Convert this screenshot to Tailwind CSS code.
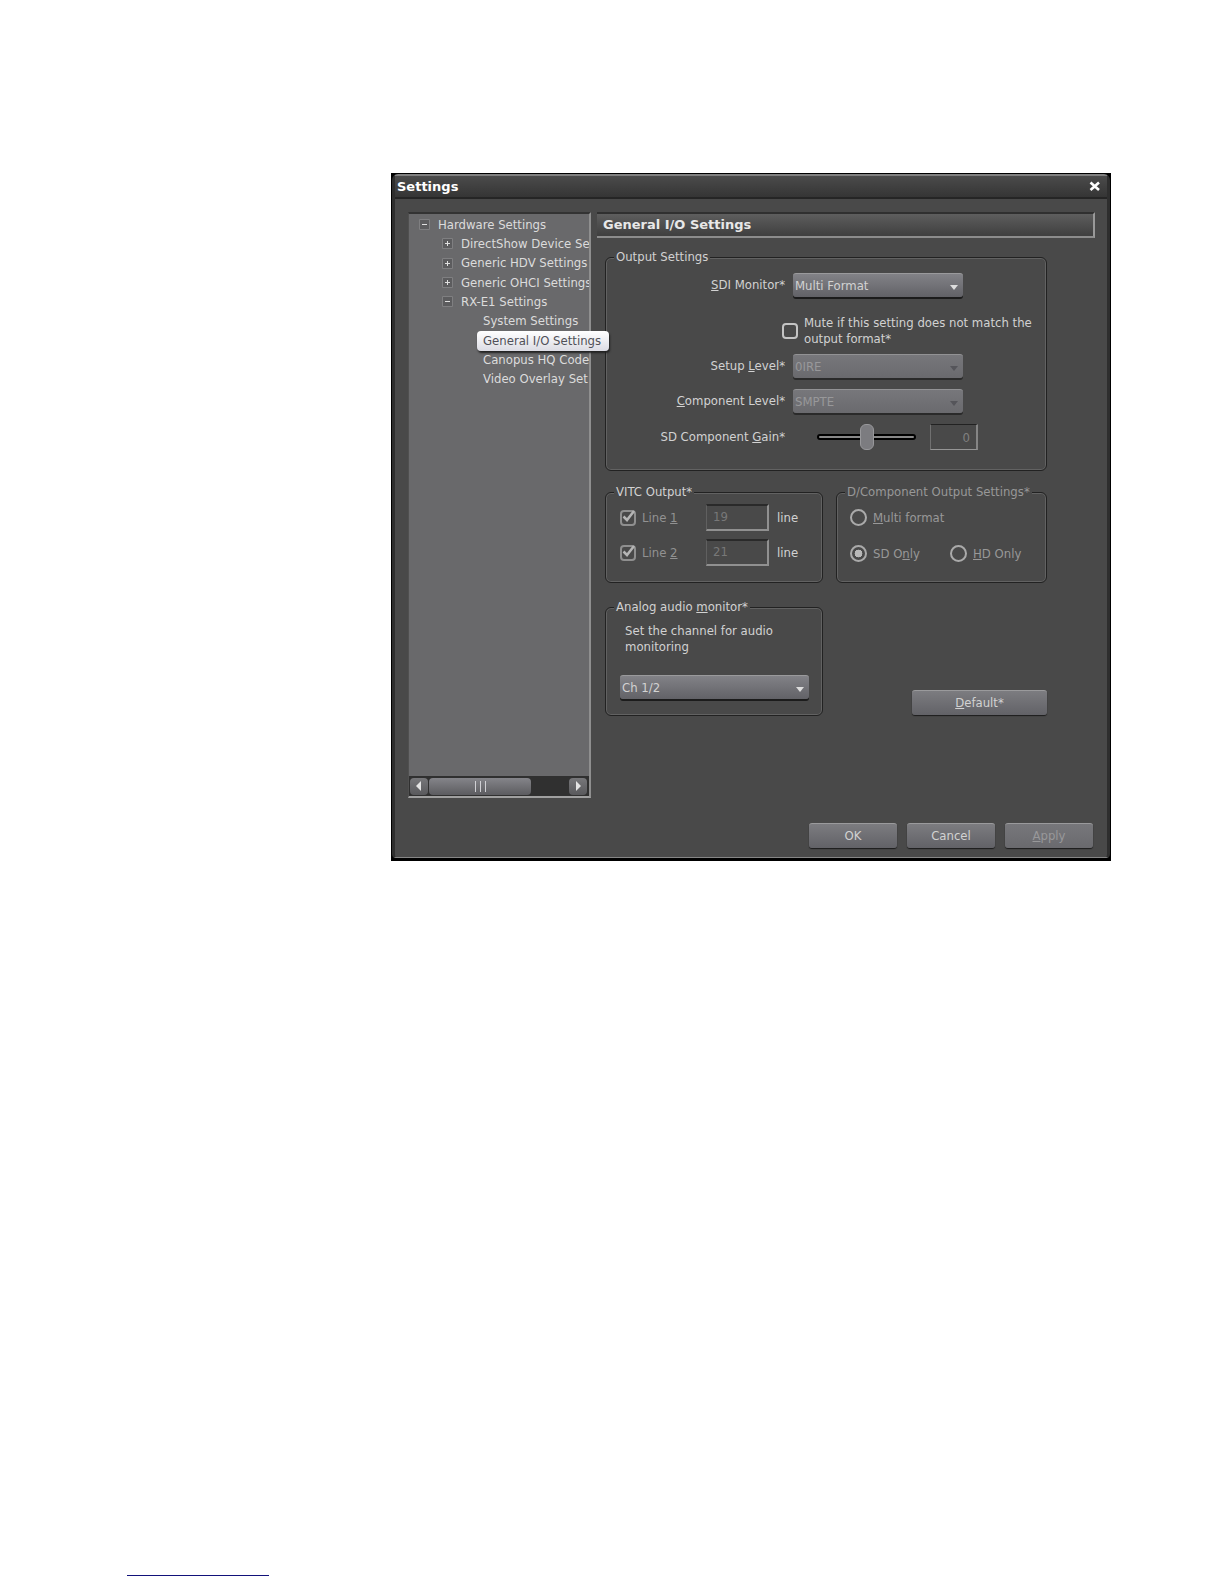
<!DOCTYPE html>
<html lang="en">
  <head>
    <meta charset="UTF-8" />
    <meta name="viewport" content="width=device-width, initial-scale=1.0" />
    <title>Settings</title>
    <script src="https://cdn.jsdelivr.net/npm/@tailwindcss/browser@4"></script>
  </head>
  <body class="min-h-screen flex flex-col justify-between bg-white font-['DejaVu_Sans_Condensed','DejaVu_Sans',sans-serif] text-[13px] leading-4 text-[#d2d2d2]">
    <main class="pt-[173px] pl-[391px] pr-[113px]">
      <!-- window frame -->
      <div class="bg-black pt-px pb-[3px] px-px">
        <div class="rounded-t-md rounded-b border-t-2 border-b border-t-[#808080] border-b-[#858585] border-x-3 border-x-[#2e2e2e] bg-[#494949]">
          <header class="h-[23px] flex items-center justify-between pl-0.5 pr-1.5 bg-linear-to-b from-[#4b4b4b] to-[#353535] border-b-2 border-[#252525] text-white">
            <h1 class="font-['DejaVu_Sans',sans-serif] text-[13px] font-bold">Settings</h1>
            <button type="button" aria-label="Close" class="p-0">
              <svg class="w-3 h-3" viewBox="0 0 12 12" stroke="#fff" stroke-width="2.6" fill="none"><path d="M1.500 1.500 10 9M10 1.500 1.500 9" /></svg>
            </button>
          </header>

          <div class="pt-[13px] pl-[13px] pr-3 flex gap-1.5">
            <!-- tree -->
            <nav class="w-[183px] shrink-0 h-[586px] flex flex-col justify-between bg-[#69696b] border-t-2 border-t-[#333] border-r-2 border-r-[#8f8f8f] border-b-2 border-b-[#a0a0a0] border-l border-l-[#505050]">
              <ul class="h-[174px] mt-px grid grid-cols-1 grid-rows-9 items-center whitespace-nowrap text-[#dcdcdc]">
                <li class="pl-2.5 flex items-center gap-2 overflow-hidden">
                  <svg class="w-[11px] h-[11px] shrink-0" viewBox="0 0 11 11" fill="none"><path d="M.5.500h10v10h-10z" fill="#5c5c5e" stroke="#7f7f81" /><path d="M3 5.500h5" stroke="#e0e0e0" /></svg>Hardware Settings</li>
                <li class="pl-[33px] flex items-center gap-2 overflow-hidden">
                  <svg class="w-[11px] h-[11px] shrink-0" viewBox="0 0 11 11" fill="none"><path d="M.5.500h10v10h-10z" fill="#5c5c5e" stroke="#7f7f81" /><path d="M3 5.500h5M5.500 3v5" stroke="#e0e0e0" /></svg>DirectShow Device Set</li>
                <li class="pl-[33px] flex items-center gap-2 overflow-hidden">
                  <svg class="w-[11px] h-[11px] shrink-0" viewBox="0 0 11 11" fill="none"><path d="M.5.500h10v10h-10z" fill="#5c5c5e" stroke="#7f7f81" /><path d="M3 5.500h5M5.500 3v5" stroke="#e0e0e0" /></svg>Generic HDV Settings</li>
                <li class="pl-[33px] flex items-center gap-2 overflow-hidden">
                  <svg class="w-[11px] h-[11px] shrink-0" viewBox="0 0 11 11" fill="none"><path d="M.5.500h10v10h-10z" fill="#5c5c5e" stroke="#7f7f81" /><path d="M3 5.500h5M5.500 3v5" stroke="#e0e0e0" /></svg>Generic OHCI Settings</li>
                <li class="pl-[33px] flex items-center gap-2 overflow-hidden">
                  <svg class="w-[11px] h-[11px] shrink-0" viewBox="0 0 11 11" fill="none"><path d="M.5.500h10v10h-10z" fill="#5c5c5e" stroke="#7f7f81" /><path d="M3 5.500h5" stroke="#e0e0e0" /></svg>RX-E1 Settings</li>
                <li class="pl-[74px] overflow-hidden">System Settings</li>
                <li class="pl-[68px] flex">
                  <span class="relative z-10 shrink-0 rounded-sm pl-1.5 pr-2 py-0.5 bg-linear-to-b from-white to-[#dcdce4] text-[#505058] shadow-[1px_2px_2px_#222]">General I/O Settings</span></li>
                <li class="pl-[74px] overflow-hidden">Canopus HQ Code</li>
                <li class="pl-[74px] overflow-hidden">Video Overlay Set</li>
              </ul>
              <div class="h-5 flex items-center justify-between bg-[#303030] pl-px pr-0.5">
                <button type="button" aria-label="Scroll left" class="w-[18px] h-[17px] flex items-center justify-center rounded-sm bg-linear-to-b from-[#77777a] to-[#59595c]">
                  <svg class="w-2.5 h-2.5" viewBox="0 0 10 10" fill="#e4e4e4"><path d="M7 0v10L2 5z" /></svg></button>
                <div class="w-[102px] h-[17px] mr-auto ml-px flex items-center justify-center gap-1 rounded-sm bg-linear-to-b from-[#85858a] to-[#5c5c60]">
                  <i class="w-px h-[11px] bg-[#d0d0d4]"></i><i class="w-px h-[11px] bg-[#d0d0d4]"></i><i class="w-px h-[11px] bg-[#d0d0d4]"></i>
                </div>
                <button type="button" aria-label="Scroll right" class="w-[18px] h-[17px] flex items-center justify-center rounded-sm bg-linear-to-b from-[#77777a] to-[#59595c]">
                  <svg class="w-2.5 h-2.5" viewBox="0 0 10 10" fill="#e4e4e4"><path d="M3 0v10l5-5z" /></svg></button>
              </div>
            </nav>

            <!-- settings panel -->
            <form class="grow" id="settings">
              <h2 class="h-[26px] flex items-center pl-1.5 border-t-2 border-t-[#303030] border-r-2 border-r-[#999] border-b-2 border-b-[#8c8c8c] bg-linear-to-b from-[#5e5e5e] to-[#3f3f3f] font-['DejaVu_Sans',sans-serif] text-[13px] font-bold text-[#e8e8e8]">General I/O Settings</h2>

              <div class="mt-2.5 ml-2 mr-12">
                <fieldset class="h-[223px] rounded-md border border-[#222] shadow-[inset_0_0_0_1px_#626262] px-2">
                  <legend class="leading-[18px] px-0.5 bg-[#494949]">Output Settings</legend>
                  <div class="pt-[7px] grid grid-cols-[171px_1fr] gap-x-2 items-center">
                    <label for="sdi" class="text-right"><u>S</u>DI Monitor*</label>
                    <div class="relative w-[170px]">
                      <select id="sdi" class="appearance-none w-full h-[24px] pl-0.5 rounded-[3px] border-t border-[#9a9a9c] bg-linear-to-b from-[#828287] to-[#626267] shadow-[0_2px_0_#1c1c1c]"><option>Multi Format</option></select>
                      <svg class="absolute right-1 top-2.5 w-2.5 h-2 pointer-events-none" viewBox="0 0 10 8" fill="#ddd"><path d="M1 2h8L5 7z" /></svg>
                    </div>
                  </div>
                  <label class="mt-[18px] ml-[168px] flex items-center gap-1.5">
                    <input type="checkbox" class="appearance-none shrink-0 w-4 h-4 rounded border-2 border-[#c4c4c4]" />
                    <span class="whitespace-nowrap">Mute if this setting does not match the<br />output format*</span>
                  </label>
                  <div class="mt-[7px] grid grid-cols-[171px_1fr] gap-x-2 gap-y-[11px] items-center">
                    <label for="setup" class="text-right">Setup <u>L</u>evel*</label>
                    <div class="relative w-[170px]">
                      <select id="setup" disabled class="appearance-none disabled:opacity-100 w-full h-[24px] pl-0.5 rounded-[3px] border-t border-[#929294] bg-linear-to-b from-[#77777b] to-[#6a6a6e] text-[#98989a] shadow-[0_2px_0_#2a2a2a]"><option>0IRE</option></select>
                      <svg class="absolute right-1 top-2.5 w-2.5 h-2 pointer-events-none" viewBox="0 0 10 8" fill="#55555a"><path d="M1 2h8L5 7z" /></svg>
                    </div>
                    <label for="component" class="text-right"><u>C</u>omponent Level*</label>
                    <div class="relative w-[170px]">
                      <select id="component" disabled class="appearance-none disabled:opacity-100 w-full h-[24px] pl-0.5 rounded-[3px] border-t border-[#929294] bg-linear-to-b from-[#77777b] to-[#6a6a6e] text-[#98989a] shadow-[0_2px_0_#2a2a2a]"><option>SMPTE</option></select>
                      <svg class="absolute right-1 top-2.5 w-2.5 h-2 pointer-events-none" viewBox="0 0 10 8" fill="#55555a"><path d="M1 2h8L5 7z" /></svg>
                    </div>
                    <label for="gain" class="text-right">SD Component <u>G</u>ain*</label>
                    <div class="pl-6 flex items-center gap-3.5">
                      <input id="gain" type="range" min="-50" max="50" value="0" class="appearance-none w-[99px] h-[26px] bg-transparent [&::-webkit-slider-runnable-track]:h-[6px] [&::-webkit-slider-runnable-track]:rounded-full [&::-webkit-slider-runnable-track]:border-2 [&::-webkit-slider-runnable-track]:border-black [&::-webkit-slider-runnable-track]:bg-[#888] [&::-webkit-slider-thumb]:appearance-none [&::-webkit-slider-thumb]:w-3.5 [&::-webkit-slider-thumb]:h-[26px] [&::-webkit-slider-thumb]:-mt-3 [&::-webkit-slider-thumb]:rounded-md [&::-webkit-slider-thumb]:border [&::-webkit-slider-thumb]:border-[#98989b] [&::-webkit-slider-thumb]:bg-[#7c7c80]" />
                      <input type="text" aria-label="SD Component Gain value" value="0" disabled class="w-12 h-[26px] pr-1.5 text-right text-[#808080] border-t border-t-[#222] border-l border-l-[#707070] border-r-2 border-r-[#858585] border-b border-b-[#959595]" />
                    </div>
                  </div>
                </fieldset>

                <div class="mt-3 flex justify-between">
                  <fieldset class="w-[218px] h-[100px] rounded-md border border-[#222] shadow-[inset_0_0_0_1px_#626262] px-2">
                    <legend class="leading-[18px] px-0.5 bg-[#494949]">VITC Output*</legend>
                    <div class="pt-[3px] pl-1.5 grid grid-cols-[86px_63px_1fr] gap-y-2 items-center">
                      <label class="flex items-center gap-1.5 text-[#929292]">
                        <span class="relative w-4 h-4"><input type="checkbox" checked disabled class="appearance-none block w-4 h-4 rounded border-2 border-[#8f8f8f]" />
                        <svg class="absolute -top-px left-0 w-4 h-4" viewBox="0 0 16 16" fill="none" stroke="#b5b5b5" stroke-width="2.500"><path d="M3.500 7.500 7 11l7-9" /></svg></span>
                        <span>Line <u>1</u></span>
                      </label>
                      <input id="line1" type="text" value="19" disabled class="w-full h-[27px] pl-1.5 pb-0.5 text-[#787878] border-t-2 border-t-[#2a2a2a] border-l border-l-[#606060] border-r-2 border-r-[#909090] border-b-2 border-b-[#909090]" />
                      <label for="line1" class="pl-2">line</label>
                      <label class="flex items-center gap-1.5 text-[#929292]">
                        <span class="relative w-4 h-4"><input type="checkbox" checked disabled class="appearance-none block w-4 h-4 rounded border-2 border-[#8f8f8f]" />
                        <svg class="absolute -top-px left-0 w-4 h-4" viewBox="0 0 16 16" fill="none" stroke="#b5b5b5" stroke-width="2.500"><path d="M3.500 7.500 7 11l7-9" /></svg></span>
                        <span>Line <u>2</u></span>
                      </label>
                      <input id="line2" type="text" value="21" disabled class="w-full h-[27px] pl-1.5 pb-0.5 text-[#787878] border-t-2 border-t-[#2a2a2a] border-l border-l-[#606060] border-r-2 border-r-[#909090] border-b-2 border-b-[#909090]" />
                      <label for="line2" class="pl-2">line</label>
                    </div>
                  </fieldset>
                  <fieldset class="w-[211px] h-[100px] rounded-md border border-[#222] shadow-[inset_0_0_0_1px_#626262] px-2 text-[#989898]">
                    <legend class="leading-[18px] px-0.5 bg-[#494949] whitespace-nowrap">D/Component Output Settings*</legend>
                    <div class="pt-2 pl-[5px] grid grid-cols-[100px_1fr] gap-y-[19px]">
                      <label class="col-span-2 flex items-center gap-1.5"><input type="radio" name="dcomp" disabled class="appearance-none w-[17px] h-[17px] rounded-full border-2 border-[#aaa]" /><span><u>M</u>ulti format</span></label>
                      <label class="flex items-center gap-1.5"><input type="radio" name="dcomp" checked disabled class="appearance-none w-[17px] h-[17px] rounded-full border-2 border-[#aaa] bg-radial from-[#b8b8b8] from-40% to-transparent to-45%" /><span>SD O<u>n</u>ly</span></label>
                      <label class="flex items-center gap-1.5"><input type="radio" name="dcomp" disabled class="appearance-none w-[17px] h-[17px] rounded-full border-2 border-[#aaa]" /><span><u>H</u>D Only</span></label>
                    </div>
                  </fieldset>
                </div>

                <div class="mt-[15px] flex justify-between items-end">
                  <fieldset class="w-[218px] h-[118px] rounded-md border border-[#222] shadow-[inset_0_0_0_1px_#626262] px-2">
                    <legend class="leading-[18px] px-0.5 bg-[#494949]">Analog audio <u>m</u>onitor*</legend>
                    <label for="channel" class="block pt-[7px] pl-[11px]">Set the channel for audio<br />monitoring</label>
                    <div class="relative mt-5 ml-1.5 w-[189px]">
                      <select id="channel" class="appearance-none w-full h-[24px] pl-0.5 rounded-[3px] border-t border-[#9a9a9c] bg-linear-to-b from-[#828287] to-[#626267] shadow-[0_2px_0_#1c1c1c]"><option>Ch 1/2</option></select>
                      <svg class="absolute right-1 top-2.5 w-2.5 h-2 pointer-events-none" viewBox="0 0 10 8" fill="#ddd"><path d="M1 2h8L5 7z" /></svg>
                    </div>
                  </fieldset>
                  <button type="button" class="w-[135px] h-[25px] mb-px rounded-[3px] border-t border-[#9a9a9c] bg-linear-to-b from-[#7c7c80] to-[#626267] shadow-[0_1px_1px_#1c1c1c]"><u>D</u>efault*</button>
                </div>
              </div>
            </form>
          </div>

          <footer class="pt-[25px] pb-[9px] pr-3.5 flex justify-end gap-2.5">
            <button type="submit" form="settings" class="w-[88px] h-[25px] rounded-[3px] border-t border-[#9a9a9c] bg-linear-to-b from-[#7c7c80] to-[#626267] shadow-[0_1px_1px_#1c1c1c]">OK</button>
            <button type="button" class="w-[88px] h-[25px] rounded-[3px] border-t border-[#9a9a9c] bg-linear-to-b from-[#7c7c80] to-[#626267] shadow-[0_1px_1px_#1c1c1c]">Cancel</button>
            <button type="button" disabled class="w-[88px] h-[25px] rounded-[3px] border-t border-[#9a9a9c] bg-linear-to-b from-[#77777b] to-[#6a6a6e] text-[#98989a] shadow-[0_1px_1px_#1c1c1c]"><u>A</u>pply</button>
          </footer>
        </div>
      </div>
    </main>

    <a href="#" aria-label="Back to top" class="ml-[127px] mb-2 w-[142px] border-b border-[#12127a]"></a>
  </body>
</html>
